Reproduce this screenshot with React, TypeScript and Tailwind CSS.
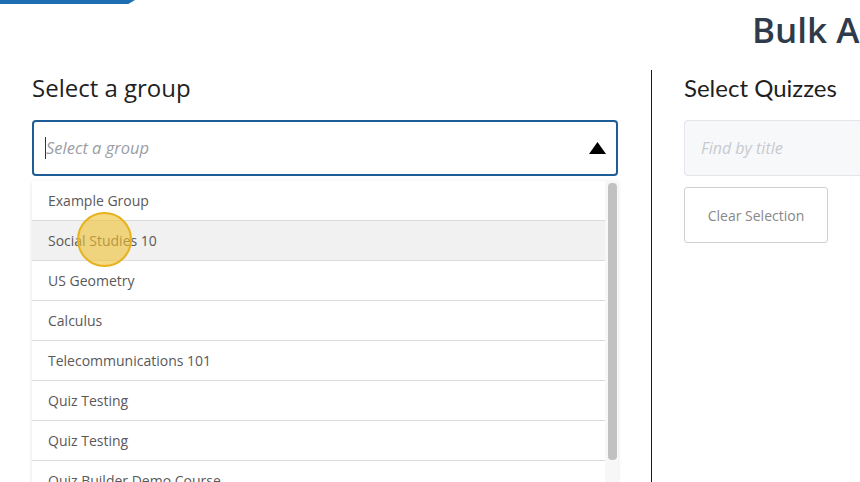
import React from "react";

const groups = [
  "Example Group",
  "Social Studies 10",
  "US Geometry",
  "Calculus",
  "Telecommunications 101",
  "Quiz Testing",
  "Quiz Testing",
  "Quiz Builder Demo Course",
];

export default function App() {
  return (
    <div className="relative h-[482px] w-[860px] overflow-hidden bg-white font-['Open_Sans',sans-serif]">
      {/* top accent */}
      <div className="h-[4px] w-[135px] bg-[#1c6db2] [clip-path:polygon(0_0,100%_0,95%_100%,0_100%)]" />

      {/* page title */}
      <div className="h-[66px] whitespace-nowrap pl-[752px] pt-[4px] text-[35px] font-semibold leading-[44px] text-[#2f3a4a]">
        Bulk Assign Quizzes
      </div>

      <div className="flex h-[412px]">
        {/* left column */}
        <div className="w-[651px] shrink-0 pl-8 pr-[33px]">
          <h2 className="h-[36px] text-[24px] leading-[36px] text-[#1f1f1f]">Select a group</h2>

          <div className="mt-[14px] flex h-[56px] items-center justify-between rounded-[4px] border-2 border-[#1d5c94] pl-[11px] pr-[10px]">
            <div className="flex items-center">
              <span className="h-[22px] w-px bg-[#333]" />
              <span className="text-[16.5px] italic text-[#9a9ea4]">Select a group</span>
            </div>
            <svg width="17" height="12" viewBox="0 0 17 12">
              <polygon points="8.5,0 17,12 0,12" fill="#000" />
            </svg>
          </div>

          <div className="mt-[5px] flex h-[320px] overflow-hidden shadow-[0_1px_4px_rgba(0,0,0,0.12)]">
            <ul className="flex-1">
              {groups.map((g, i) => (
                <li
                  key={i}
                  className={`flex h-10 items-center border-b border-[#dcdcdc] pl-4 text-[14px] text-[#595959] ${
                    i === 1 ? "bg-[#f1f1f1]" : "bg-white"
                  }`}
                >
                  {g}
                </li>
              ))}
            </ul>
            <div className="w-[13px] bg-[#f7f7f7] pl-[3px] pr-[1px] pt-[2px]">
              <div className="h-[277px] w-[9px] rounded-[4px] bg-[#c1c1c1]" />
            </div>
          </div>
        </div>

        {/* right column */}
        <div className="flex-1 whitespace-nowrap border-l border-[#1a1a1a] pl-8">
          <h2 className="h-[36px] font-['Lato',sans-serif] text-[24px] leading-[36px] text-[#1f1f1f]">
            Select Quizzes
          </h2>
          <div className="mt-[14px] flex h-[56px] w-[240px] items-center rounded-l-[4px] border border-r-0 border-[#e3e6ea] bg-[#f7f8fa] pl-4">
            <span className="text-[16px] italic text-[#c6cad0]">Find by title</span>
          </div>
          <button className="mt-[11px] h-[56px] w-[144px] rounded-[3px] border border-[#d0d0d0] bg-white text-[14px] text-[#888]">
            Clear Selection
          </button>
        </div>
      </div>

      {/* click highlight */}
      <div className="absolute left-[77px] top-[212px] h-[55px] w-[55px] rounded-full border-2 border-[#e6b21e] bg-[#f0c030]/60" />
    </div>
  );
}
